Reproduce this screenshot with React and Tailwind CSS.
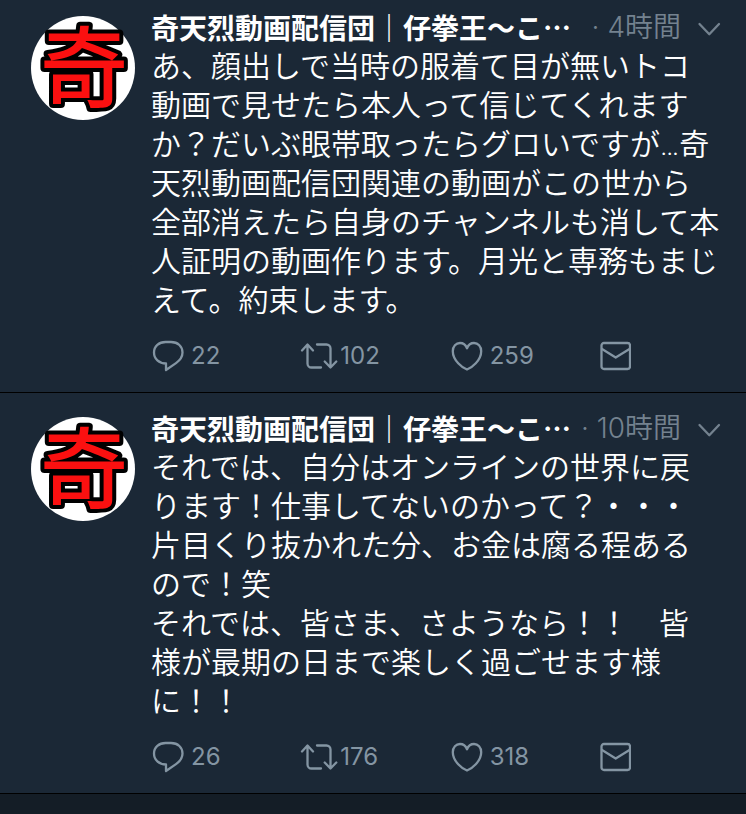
import React from 'react';
import clsx from 'clsx';

const AUTHOR = '奇天烈動画配信団｜仔拳王〜こ…';

const tweets = [
  {
    id: 1,
    time: '4時間',
    lines: [
      'あ、顔出しで当時の服着て目が無いトコ',
      '動画で見せたら本人って信じてくれます',
      'か？だいぶ眼帯取ったらグロいですが…奇',
      '天烈動画配信団関連の動画がこの世から',
      '全部消えたら自身のチャンネルも消して本',
      '人証明の動画作ります。月光と専務もまじ',
      'えて。約束します。',
    ],
    replies: 22,
    retweets: 102,
    likes: 259,
  },
  {
    id: 2,
    time: '10時間',
    lines: [
      'それでは、自分はオンラインの世界に戻',
      'ります！仕事してないのかって？・・・',
      '片目くり抜かれた分、お金は腐る程ある',
      'ので！笑',
      'それでは、皆さま、さようなら！！　皆',
      '様が最期の日まで楽しく過ごせます様',
      'に！！',
    ],
    replies: 26,
    retweets: 176,
    likes: 318,
  },
];

// --- Icons ---

const stroke = {
  fill: 'none',
  stroke: 'currentColor',
  strokeWidth: 2.3,
  strokeLinecap: 'round',
  strokeLinejoin: 'round',
  'aria-hidden': true,
};

function ReplyIcon() {
  return (
    <svg width="34" height="32" viewBox="0 0 34 32" {...stroke}>
      <path d="M15 23.5C8 23.5 3 19 3 12.500S8 2 14.500 2h5.500C27 2 31.500 6.500 31.500 12.500c0 5-2.500 7.800-6.500 10.600L15 30v-6.500z" />
    </svg>
  );
}

function RetweetIcon() {
  return (
    <svg width="38" height="32" viewBox="0 0 38 32" {...stroke}>
      <path d="M2 10.500L7.500 4.500l5.500 6M7.500 5V23.500a4 4 0 0 0 4 4H21" />
      <path d="M17 4.500h9.500a4 4 0 0 1 4 4v18.500M24.700 21.500l5.800 6 5.800-6" />
    </svg>
  );
}

function HeartIcon() {
  return (
    <svg width="34" height="32" viewBox="0 0 34 32" {...stroke}>
      <path d="M17 29.500C12.500 27.800 2.800 20.500 2.800 11.200 2.800 6.200 6 3 10 3c3.200 0 5.700 2 7 5.200C18.300 5 20.800 3 24 3c4 0 7.200 3.200 7.200 8.200C31.200 20.500 21.500 27.800 17 29.500z" />
    </svg>
  );
}

function MailIcon() {
  return (
    <svg width="32" height="32" viewBox="0 0 32 32" {...stroke}>
      <rect x="2.500" y="3" width="28.500" height="26" rx="2.500" />
      <path d="M3 9l13.700 8.500L30.500 9" />
    </svg>
  );
}

function ChevronIcon() {
  return (
    <svg width="24" height="16" viewBox="0 0 24 16" {...stroke}>
      <path d="M2.500 4l9.800 10.200L22 4" />
    </svg>
  );
}

function Avatar() {
  return (
    <svg
      className="mt-2 size-26 shrink-0 overflow-visible rounded-full bg-white"
      viewBox="0 0 104 104"
      role="img"
    >
      <text
        x="53"
        y="84"
        textAnchor="middle"
        className="fill-[#fb1010] stroke-black stroke-[8px] text-[88px] font-medium [paint-order:stroke] [stroke-linejoin:round]"
      >
        奇
      </text>
    </svg>
  );
}

// --- Tweet ---

function Action({ icon, label, count, tight }) {
  return (
    <button
      type="button"
      aria-label={count === undefined ? label : undefined}
      className={clsx('flex items-center', tight ? 'gap-0.5' : 'gap-1.5')}
    >
      {icon}
      {count !== undefined && <span className="font-['Inter',sans-serif] text-2xl">{count}</span>}
    </button>
  );
}

function Tweet({ tweet }) {
  return (
    <article className="flex gap-4 border-b border-black bg-[#1b2836] pt-4 pr-[25px] pb-4 pl-[31px] first:pt-2">
      <Avatar />
      <div className="min-w-0 flex-1">
        <header className="flex h-[39px] items-center text-[28px] leading-[39px] text-[#74828f]">
          <h2 className="min-w-0 truncate font-bold text-white">{AUTHOR}</h2>
          <span className="ml-auto shrink-0 font-['Inter','Noto_Sans_CJK_JP',sans-serif] font-[350] whitespace-nowrap">
            · {tweet.time}
          </span>
          <button type="button" aria-label="メニュー" className="ml-4 shrink-0">
            <ChevronIcon />
          </button>
        </header>

        <p className="font-['Roboto','Noto_Sans_CJK_JP',sans-serif] text-[30px] leading-[39px] font-[350] whitespace-pre text-white">
          {tweet.lines.join('\n')}
        </p>

        <div className="mt-4 grid h-10 grid-cols-[1fr_1fr_1fr_122px] text-[#8495a3]">
          <Action icon={<ReplyIcon />} label="返信" count={tweet.replies} />
          <Action icon={<RetweetIcon />} label="リツイート" count={tweet.retweets} tight />
          <Action icon={<HeartIcon />} label="いいね" count={tweet.likes} />
          <Action icon={<MailIcon />} label="ダイレクトメッセージ" />
        </div>
      </div>
    </article>
  );
}

function App() {
  return (
    <main lang="ja" className="min-h-screen bg-[#141d26] font-['Noto_Sans_CJK_JP',sans-serif]">
      {tweets.map((tweet) => (
        <Tweet key={tweet.id} tweet={tweet} />
      ))}
    </main>
  );
}

export default App;
